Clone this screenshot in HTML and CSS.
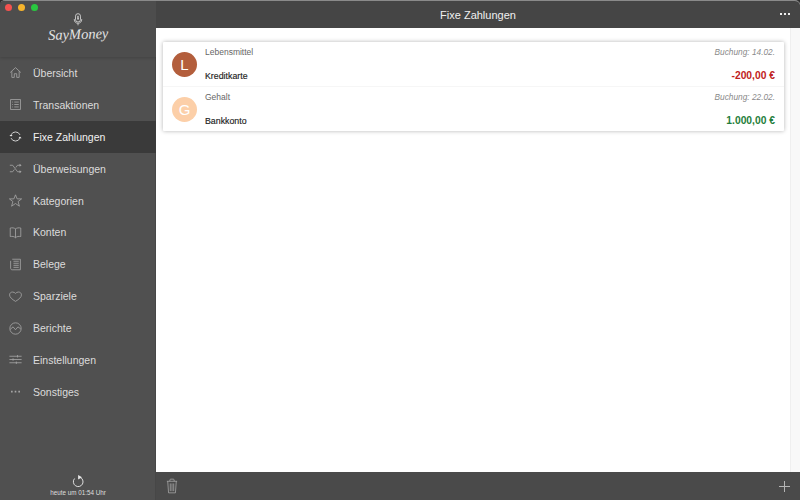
FILE: index.html
```html
<!DOCTYPE html>
<html lang="de">
<head>
  <meta charset="UTF-8">
  <title>SayMoney</title>
  <link rel="stylesheet" href="styles.css">
</head>
<body>
  <div class="app">
    <aside class="sidebar">
      <div class="brand">
        <div class="traffic">
          <span class="dot red"></span>
          <span class="dot yellow"></span>
          <span class="dot green"></span>
        </div>
        <svg class="mic" viewBox="0 0 12 16" fill="none" stroke="#d8d8d8" stroke-width="1">
          <rect x="3" y="1" width="6" height="10" rx="3"/>
          <path d="M6 3.5V8.5M4.8 5H7M5 7H7.2M1.5 7.5C1.5 11 3.5 12.5 6 12.5S10.5 11 10.5 7.5M6 12.5V15"/>
        </svg>
        <div class="logo">SayMoney</div>
      </div>
      <nav class="nav">
        <a class="nav-item">
          <svg class="icon" viewBox="0 0 16 16"><path d="M1.5 8L8 2L14.5 8M3.5 6.5V14H6.5V9.5H9.5V14H12.5V6.5"/></svg>
          Übersicht
        </a>
        <a class="nav-item">
          <svg class="icon" viewBox="0 0 16 16"><rect x="2" y="2" width="12" height="12"/><path d="M4 5H5M6.5 5H12M4 8H5M6.5 8H12M4 11H5M6.5 11H12"/></svg>
          Transaktionen
        </a>
        <a class="nav-item active">
          <svg class="icon" viewBox="0 0 16 16"><path d="M2.5 6A6 6 0 0 1 13.5 6M13.5 10A6 6 0 0 1 2.5 10"/><path class="fill" d="M0.5 6H4.5L2.5 8ZM11.5 10H15.5L13.5 8Z"/></svg>
          Fixe Zahlungen
        </a>
        <a class="nav-item">
          <svg class="icon" viewBox="0 0 16 16"><path d="M1 4H4.5L10.5 12H13.5M1 12H4.5L6.6 9.2M8.4 6.8L10.5 4H13.5"/><path class="fill" d="M13 2.2L15.5 4L13 5.8ZM13 10.2L15.5 12L13 13.8Z"/></svg>
          Überweisungen
        </a>
        <a class="nav-item">
          <svg class="icon" viewBox="0 0 16 16"><path d="M8 1L10 6H15.5L11.2 9.3L12.8 15L8 11.7L3.2 15L4.8 9.3L0.5 6H6Z"/></svg>
          Kategorien
        </a>
        <a class="nav-item">
          <svg class="icon" viewBox="0 0 16 16"><path d="M8 3.5C6.2 2.2 4 2 1.5 2.5V13C4 12.5 6.2 12.7 8 14.5C9.8 12.7 12 12.5 14.5 13V2.5C12 2 9.8 2.2 8 3.5ZM8 3.5V14.5"/></svg>
          Konten
        </a>
        <a class="nav-item">
          <svg class="icon" viewBox="0 0 16 16"><path d="M4 1.5H14V14.5H4C2.8 14.5 2 13.8 2 12.5V3.5"/><path d="M5.5 4H12M5.5 6.5H12M5.5 9H12M5.5 11.5H12"/></svg>
          Belege
        </a>
        <a class="nav-item">
          <svg class="icon" viewBox="0 0 16 16"><path d="M8 14C3.5 11.3 0.7 8.8 0.7 6C0.7 3.8 2.4 2.5 4.3 2.5C5.8 2.5 7.2 3.2 8 4.2C8.8 3.2 10.2 2.5 11.7 2.5C13.6 2.5 15.3 3.8 15.3 6C15.3 8.8 12.5 11.3 8 14Z"/></svg>
          Sparziele
        </a>
        <a class="nav-item">
          <svg class="icon" viewBox="0 0 16 16"><circle cx="8" cy="8" r="7"/><path d="M1.5 9L5 6L8 9.5L11 6L14.5 8.5"/></svg>
          Berichte
        </a>
        <a class="nav-item">
          <svg class="icon" viewBox="0 0 16 16"><path d="M0.5 4H15.5M0.5 8H15.5M0.5 12H15.5M10.5 2.5V5.5M5 6.5V9.5M9 10.5V13.5"/></svg>
          Einstellungen
        </a>
        <a class="nav-item">
          <svg class="icon" viewBox="0 0 16 16"><path class="fill" d="M2.5 7.2h2v2h-2zM7 7.2h2v2h-2zM11.5 7.2h2v2h-2z"/></svg>
          Sonstiges
        </a>
      </nav>
      <div class="sync">
        <svg class="sync-icon" viewBox="0 0 14 14"><path d="M8.5 2.4A5.2 5.2 0 1 1 2.8 3.8"/><path class="fill" d="M6.6 0L10.8 2.4L6.6 4.8Z"/></svg>
        <span>heute um 01:54 Uhr</span>
      </div>
    </aside>

    <main class="main">
      <header class="titlebar">
        <h1>Fixe Zahlungen</h1>
        <div class="more"><span></span><span></span><span></span></div>
      </header>
      <div class="content">
        <section class="list">
          <div class="card">
            <article class="row">
              <div class="avatar brown">L</div>
              <div class="info">
                <div class="line">
                  <span class="category">Lebensmittel</span>
                  <span class="date">Buchung: 14.02.</span>
                </div>
                <div class="line">
                  <span class="account">Kreditkarte</span>
                  <span class="amount neg">-200,00 €</span>
                </div>
              </div>
            </article>
            <article class="row">
              <div class="avatar peach">G</div>
              <div class="info">
                <div class="line">
                  <span class="category">Gehalt</span>
                  <span class="date">Buchung: 22.02.</span>
                </div>
                <div class="line">
                  <span class="account">Bankkonto</span>
                  <span class="amount pos">1.000,00 €</span>
                </div>
              </div>
            </article>
          </div>
        </section>
        <div class="scrollbar"></div>
      </div>
      <footer class="toolbar">
        <svg class="trash" viewBox="0 0 14 18"><path d="M1 3.5H13M4.5 3.5V2C4.5 1.4 5 1 5.5 1H8.5C9 1 9.5 1.4 9.5 2V3.5M2 3.5L3 17H11L12 3.5M5 6V15M7 6V15M9 6V15"/></svg>
        <svg class="plus" viewBox="0 0 11 11"><path d="M5.5 0V11M0 5.5H11"/></svg>
      </footer>
    </main>
  </div>
</body>
</html>
```

FILE: styles.css
```css
* {
  margin: 0;
  padding: 0;
  box-sizing: border-box;
}

html, body {
  width: 800px;
  height: 500px;
  overflow: hidden;
  background: #2e2e2e;
}

body {
  font-family: "Liberation Sans", sans-serif;
  color: #fff;
}

.app {
  display: flex;
  width: 800px;
  height: 500px;
  border-radius: 5px 5px 0 0;
  border-top: 1px solid #8a8a8a;
  overflow: hidden;
}

/* sidebar */
.sidebar {
  width: 156px;
  flex-shrink: 0;
  display: flex;
  flex-direction: column;
  background: #505050;
  box-shadow: inset -1px 0 0 #474747;
}

.brand {
  height: 56px;
  flex-shrink: 0;
  padding-top: 3px;
  display: flex;
  flex-direction: column;
  align-items: center;
  background: #4d4d4d;
  box-shadow: 0 1px 3px rgba(0, 0, 0, 0.18);
}

.traffic {
  align-self: flex-start;
  display: flex;
  gap: 6px;
  padding-left: 5px;
}

.dot {
  width: 7px;
  height: 7px;
  border-radius: 50%;
}

.red { background: #f4524f; }
.yellow { background: #f6b42c; }
.green { background: #29c740; }

.mic {
  width: 10px;
  height: 15px;
  margin-top: 1px;
}

.logo {
  font-family: "Liberation Serif", serif;
  font-style: italic;
  font-size: 14.5px;
  line-height: 14px;
  color: #e4e4e4;
  transform: rotate(-2deg);
}

.nav {
  flex: 1;
  display: flex;
  flex-direction: column;
}

.nav-item {
  height: 31.9px;
  flex-shrink: 0;
  display: flex;
  align-items: center;
  gap: 11px;
  padding-left: 9px;
  font-size: 10.5px;
  color: #dcdcdc;
}

.nav-item.active {
  background: #3a3a3a;
  color: #f2f2f2;
}

.icon {
  width: 13px;
  height: 13px;
  fill: none;
  stroke: #a6a6a6;
  stroke-width: 1;
}

.icon .fill {
  fill: #a6a6a6;
  stroke: none;
}

.active .icon {
  stroke: #eee;
}

.active .icon .fill {
  fill: #eee;
}

.sync {
  height: 23px;
  display: flex;
  flex-direction: column;
  align-items: center;
  margin-bottom: 2px;
  font-size: 6.3px;
  color: #dedede;
}

.sync-icon {
  width: 13px;
  height: 13px;
  fill: none;
  stroke: #e8e8e8;
  stroke-width: 1;
  margin-bottom: 1px;
}

.sync-icon .fill {
  fill: #e8e8e8;
  stroke: none;
}

/* main */
.main {
  flex: 1;
  display: flex;
  flex-direction: column;
  background: #fff;
}

.titlebar {
  height: 27px;
  display: flex;
  align-items: center;
  justify-content: center;
  position: relative;
  background: #454545;
}

.titlebar h1 {
  font-size: 11px;
  font-weight: 400;
  color: #f0f0f0;
}

.more {
  position: absolute;
  right: 10px;
  top: 12px;
  display: flex;
  gap: 2px;
}

.more span {
  width: 2px;
  height: 2px;
  background: #eee;
}

.content {
  flex: 1;
  display: flex;
  min-height: 0;
}

.list {
  flex: 1;
  padding: 14px 6px 0 7px;
}

.card {
  background: #fff;
  box-shadow: 0 0 4px rgba(0, 0, 0, 0.3);
  border-radius: 1px;
}

.row {
  height: 44px;
  display: flex;
  align-items: center;
  gap: 8px;
  padding: 0 9px;
}

.row + .row {
  height: 45px;
  border-top: 1px solid #f6f6f6;
}

.avatar {
  width: 25px;
  height: 25px;
  flex-shrink: 0;
  border-radius: 50%;
  display: flex;
  align-items: center;
  justify-content: center;
  font-size: 15px;
  color: #fff;
}

.brown { background: #b35e3c; }
.peach { background: #fccfa8; }

.info {
  flex: 1;
  height: 100%;
  display: flex;
  flex-direction: column;
  justify-content: space-between;
  padding: 5px 0 5px;
}

.line {
  display: flex;
  justify-content: space-between;
  align-items: baseline;
}

.category {
  font-size: 8.5px;
  color: #666;
}

.date {
  font-size: 8.3px;
  font-style: italic;
  color: #8a8a8a;
}

.account {
  font-size: 8.8px;
  color: #222;
  -webkit-text-stroke: 0.15px #222;
}

.amount {
  font-size: 10.3px;
  font-weight: 700;
}

.neg { color: #bf2222; }
.pos { color: #1e7d3a; }

.scrollbar {
  width: 10px;
  background: #f8f8f8;
  border-left: 1px solid #efefef;
}

.toolbar {
  height: 28px;
  flex-shrink: 0;
  display: flex;
  align-items: center;
  justify-content: space-between;
  padding: 0 10px;
  background: #4a4a4a;
}

.trash {
  width: 12px;
  height: 16px;
  fill: none;
  stroke: #b4b4b4;
  stroke-width: 0.8;
}

.plus {
  width: 11px;
  height: 11px;
  stroke: #b4b4b4;
  stroke-width: 1;
}
```
